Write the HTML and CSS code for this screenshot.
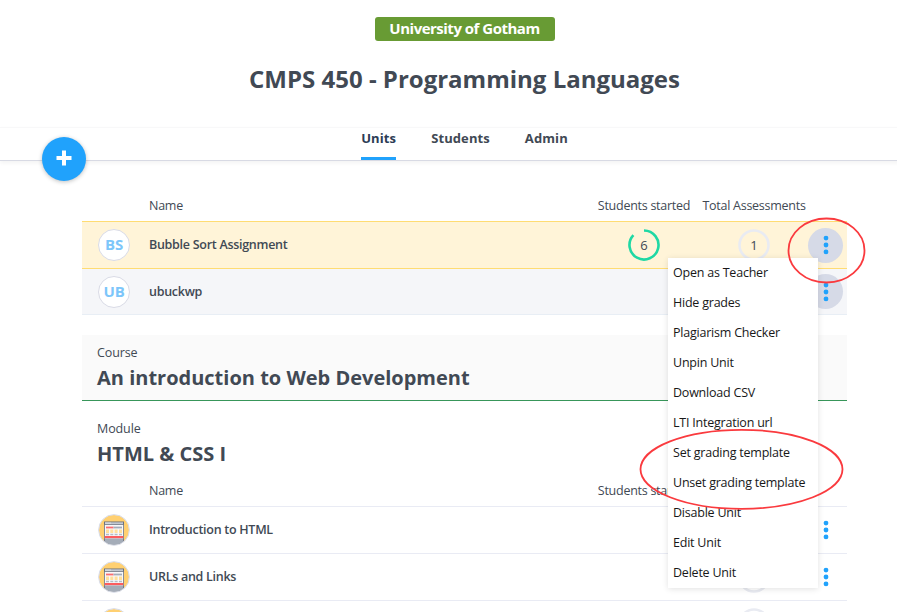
FILE: index.html
```html
<!DOCTYPE html>
<html lang="en">
<head>
<meta charset="utf-8">
<title>CMPS 450 - Programming Languages</title>
<link rel="stylesheet" href="styles.css">
</head>
<body>
<svg class="defs" width="0" height="0">
  <defs>
    <clipPath id="disc"><circle cx="16" cy="16" r="15"/></clipPath>
    <symbol id="page-icon" viewBox="0 0 32 32">
      <circle cx="16" cy="16" r="15" fill="#ffd071"/>
      <g clip-path="url(#disc)">
        <rect x="6" y="7.5" width="20" height="25" fill="#69717f"/>
        <rect x="7" y="8.3" width="18" height="1.7" fill="#c3c8d0"/>
        <path d="M7.5 9h1M9.5 9h1M11.5 9h1" stroke="#fff" stroke-width="1"/>
        <rect x="6.8" y="10.8" width="18.4" height="14" fill="#f8f8fa"/>
        <rect x="8" y="12.6" width="7.5" height="1.8" fill="#fc6c6f"/>
        <rect x="15.5" y="12.6" width="8.5" height="1.8" fill="#a4acb8"/>
        <path d="M8 17.2h3M12.3 17.2h3M16.6 17.2h3M21 17.2h3" stroke="#ffdf9c" stroke-width="3.6"/>
        <path d="M8 20.5h3M12.3 20.5h3M16.6 20.5h3M21 20.5h3" stroke="#b4bbc5" stroke-width="1.5"/>
        <rect x="6.8" y="22" width="18.4" height="2.2" fill="#fc5c5f"/>
        <rect x="6.8" y="24.6" width="18.4" height="8" fill="#a4acb8"/>
      </g>
      <circle cx="16" cy="16" r="15.4" fill="none" stroke="#d7dbe7"/>
    </symbol>
    <symbol id="dots" viewBox="0 0 6 20">
      <circle cx="3" cy="3.1" r="2.4"/><circle cx="3" cy="10" r="2.4"/><circle cx="3" cy="16.9" r="2.4"/>
    </symbol>
    <symbol id="ring" viewBox="0 0 32 32">
      <circle cx="16" cy="16" r="14.5" fill="none" stroke="#e9ebf2" stroke-width="2.6"/>
    </symbol>
  </defs>
</svg>
<div class="page">
  <header class="header">
    <span class="badge">University of Gotham</span>
    <h1>CMPS 450 - Programming Languages</h1>
  </header>
  <nav class="nav">
    <a class="tab active">Units</a>
    <a class="tab">Students</a>
    <a class="tab">Admin</a>
  </nav>
  <button class="add" aria-label="Add"><svg width="16" height="16" viewBox="0 0 16 16"><path d="M8 .5v15M.5 8h15" stroke="#fff" stroke-width="4"/></svg></button>

  <main class="content">
    <section>
      <div class="cols head"><span></span><span>Name</span><span class="num">Students started</span><span class="num">Total Assessments</span></div>
      <div class="cols row pinned">
        <span class="avatar">BS</span><span class="name">Bubble Sort Assignment</span>
        <span class="count"><svg width="32" height="32" viewBox="0 0 32 32"><path d="M16 1.5A14.5 14.5 0 1 1 5.4 6.1" fill="none" stroke="#1fd8a4" stroke-width="2.6"/></svg><b>6</b></span>
        <span class="count"><svg width="32" height="32"><use href="#ring"/></svg><b>1</b></span>
        <span class="more filled"><svg width="6" height="20"><use href="#dots"/></svg></span>
      </div>
      <div class="cols row shaded">
        <span class="avatar">UB</span><span class="name">ubuckwp</span><span></span><span></span>
        <span class="more filled"><svg width="6" height="20"><use href="#dots"/></svg></span>
      </div>
    </section>

    <section class="course">
      <p>Course</p>
      <h2>An introduction to Web Development</h2>
    </section>

    <section>
      <div class="module">
        <p>Module</p>
        <h2>HTML &amp; CSS I</h2>
      </div>
      <div class="cols head small"><span></span><span>Name</span><span class="num">Students started</span><span class="num"></span></div>
      <div class="cols row first">
        <svg width="32" height="32"><use href="#page-icon"/></svg><span class="name">Introduction to HTML</span><span></span>
        <span class="count"><svg width="32" height="32"><use href="#ring"/></svg></span>
        <span class="more"><svg width="6" height="20"><use href="#dots"/></svg></span>
      </div>
      <div class="cols row">
        <svg width="32" height="32"><use href="#page-icon"/></svg><span class="name">URLs and Links</span><span></span>
        <span class="count"><svg width="32" height="32"><use href="#ring"/></svg></span>
        <span class="more"><svg width="6" height="20"><use href="#dots"/></svg></span>
      </div>
      <div class="cols row">
        <svg width="32" height="32"><use href="#page-icon"/></svg><span></span><span></span>
        <span class="count"><svg width="32" height="32"><use href="#ring"/></svg></span>
        <span class="more"></span>
      </div>
    </section>
  </main>

  <ul class="menu">
    <li>Open as Teacher</li>
    <li>Hide grades</li>
    <li>Plagiarism Checker</li>
    <li>Unpin Unit</li>
    <li>Download CSV</li>
    <li>LTI Integration url</li>
    <li>Set grading template</li>
    <li>Unset grading template</li>
    <li>Disable Unit</li>
    <li>Edit Unit</li>
    <li>Delete Unit</li>
  </ul>
  <svg class="marks" width="897" height="612" fill="none" stroke="#fa3a3e" stroke-width="1.8">
    <ellipse cx="826.5" cy="250.5" rx="38" ry="32"/>
    <ellipse cx="741.5" cy="469.3" rx="101" ry="39.5"/>
  </svg>
</div>
</body>
</html>
```
FILE: styles.css
```css
* { box-sizing: border-box; }
html { overflow: hidden; }
body {
  margin: 0;
  height: 612px;
  overflow: hidden;
  background: #fff;
  color: #414954;
  font: 12.5px/18px "Open Sans", sans-serif;
  letter-spacing: -.1px;
}
h1, h2, p, ul { margin: 0; padding: 0; }
.defs { position: absolute; }
.page { position: relative; width: 929px; height: 612px; overflow: hidden; }

.header {
  display: flex;
  flex-direction: column;
  align-items: center;
  height: 127px;
  padding-top: 17px;
}
.badge {
  width: 180px;
  height: 24px;
  border-radius: 3px;
  background: #689b34;
  color: #fff;
  font-size: 15px;
  font-weight: 700;
  line-height: 23px;
  text-align: center;
  letter-spacing: -.5px;
}
h1 { margin-top: 21px; font-size: 24px; line-height: 33px; letter-spacing: 0; }

.nav {
  display: flex;
  justify-content: center;
  gap: 35px;
  height: 34px;
  border-top: 1px solid #f8f8f9;
  border-bottom: 1px solid #d8dae4;
  box-shadow: 0 2px 4px rgba(0, 0, 0, .05);
}
.tab { height: 32px; padding-top: 1px; font-size: 13px; font-weight: 700; letter-spacing: .1px; }
.tab.active { border-bottom: 3px solid #20a2fc; color: #2c3c55; }
.add {
  position: absolute;
  left: 42px;
  top: 137px;
  display: flex;
  align-items: center;
  justify-content: center;
  width: 44px;
  height: 44px;
  padding: 0 0 2px;
  border: 0;
  border-radius: 50%;
  background: #20a2fc;
  box-shadow: 0 1px 4px rgba(0, 0, 0, .25);
}

.content { width: 765px; margin-left: 82px; padding-top: 28px; }
.cols {
  display: grid;
  grid-template-columns: 51px 1fr 110px 110px 38px;
  align-items: center;
  padding-left: 16px;
}
.head { height: 32px; padding-top: 1px; letter-spacing: -.26px; }
.head.small { height: 31px; padding-top: 0; }
.num { text-align: center; white-space: nowrap; }
.row { height: 47px; border-bottom: 1px solid #e9ebf4; }
.row.first { height: 48px; border-top: 1px solid #e9ebf4; }
.pinned { height: 48px; border-top: 1px solid #ffdc72; border-bottom-color: #ffdc72; background: #fff4d8; }
.shaded { height: 46px; background: #f5f6f9; border-color: #e8eef5; }
.name { font-weight: 600; letter-spacing: -.28px; }
.avatar {
  width: 32px;
  height: 32px;
  border: 1px solid #d9dbe6;
  border-radius: 50%;
  background: #fff;
  color: #7dc6fa;
  font-size: 15px;
  font-weight: 700;
  line-height: 29px;
  text-align: center;
}
.count { display: grid; place-items: center; }
.count > * { grid-area: 1 / 1; }
.count b { font-weight: 400; font-size: 13px; }
.more {
  display: flex;
  align-items: center;
  justify-content: center;
  width: 35px;
  height: 35px;
  margin-left: -1px;
  border-radius: 50%;
  fill: #20a2fc;
}
.filled { background: #d6dae7; }

.course {
  height: 66px;
  margin-top: 20px;
  padding: 9px 15px 0;
  border-bottom: 1px solid #38965a;
  background: #fafafa;
}
.module { height: 74px; padding: 19px 15px 0; }
h2 { margin-top: 2px; font-size: 20px; line-height: 28px; letter-spacing: 0; }

.menu {
  position: absolute;
  left: 668px;
  top: 258px;
  width: 150px;
  list-style: none;
  background: #fff;
  color: #181818;
  letter-spacing: -.22px;
  box-shadow: 0 1px 6px rgba(0, 0, 0, .12);
}
.menu li { height: 30px; padding-left: 5px; line-height: 30px; }
.marks { position: absolute; left: 0; top: 0; }
```
